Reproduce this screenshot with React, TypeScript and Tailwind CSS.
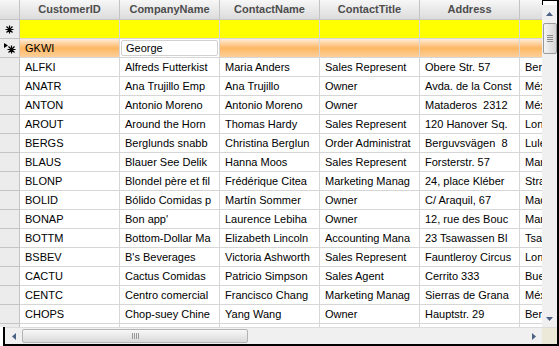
import React from "react";

const columns = ["CustomerID", "CompanyName", "ContactName", "ContactTitle", "Address", "City"];

const rows = [
    ["ALFKI", "Alfreds Futterkist", "Maria Anders", "Sales Represent", "Obere Str. 57", "Berlin"],
    ["ANATR", "Ana Trujillo Emp", "Ana Trujillo", "Owner", "Avda. de la Const", "México D.F."],
    ["ANTON", "Antonio Moreno", "Antonio Moreno", "Owner", "Mataderos  2312", "México D.F."],
    ["AROUT", "Around the Horn", "Thomas Hardy", "Sales Represent", "120 Hanover Sq.", "London"],
    ["BERGS", "Berglunds snabb", "Christina Berglun", "Order Administrat", "Berguvsvägen  8", "Luleå"],
    ["BLAUS", "Blauer See Delik", "Hanna Moos", "Sales Represent", "Forsterstr. 57", "Mannheim"],
    ["BLONP", "Blondel père et fil", "Frédérique Citea", "Marketing Manag", "24, place Kléber", "Strasbourg"],
    ["BOLID", "Bólido Comidas p", "Martín Sommer", "Owner", "C/ Araquil, 67", "Madrid"],
    ["BONAP", "Bon app'", "Laurence Lebiha", "Owner", "12, rue des Bouc", "Marseille"],
    ["BOTTM", "Bottom-Dollar Ma", "Elizabeth Lincoln", "Accounting Mana", "23 Tsawassen Bl", "Tsawassen"],
    ["BSBEV", "B's Beverages", "Victoria Ashworth", "Sales Represent", "Fauntleroy Circus", "London"],
    ["CACTU", "Cactus Comidas", "Patricio Simpson", "Sales Agent", "Cerrito 333", "Buenos Aires"],
    ["CENTC", "Centro comercial", "Francisco Chang", "Marketing Manag", "Sierras de Grana", "México D.F."],
    ["CHOPS", "Chop-suey Chine", "Yang Wang", "Owner", "Hauptstr. 29", "Bern"],
    ["", "", "", "", "", ""],
];

const orange = "bg-gradient-to-b from-[#feecd8] via-[#fdb762] to-[#fdcf98]";

function Star() {
    return (
        <svg width="9" height="9" viewBox="0 0 9 9" className="text-black">
            <path d="M4.5 0.5V8.5M0.5 4.5H8.5M1.5 1.5L7.5 7.5M7.5 1.5L1.5 7.5" stroke="currentColor" strokeWidth="1.2" />
        </svg>
    )
}

function RowHead({ children }: { children?: React.ReactNode }) {
    return (
        <div className="w-[20px] h-[19px] shrink-0 bg-[#ececec] border-r border-b border-[#c4c4c4] flex items-center justify-center relative">
            {children}
        </div>
    )
}

function Cell({ text, className = "" }: { text: string; className?: string }) {
    return (
        <div className={`w-[100px] h-[19px] shrink-0 border-r border-b border-[#d6d6d6] pl-[5px] overflow-hidden whitespace-pre leading-[18px] ${className}`}>
            {text}
        </div>
    )
}

function VScroll() {
    return (
        <div className="w-[17px] shrink-0 flex flex-col border-r-2 border-black">
            <div className="h-[5px] border-t border-l border-black bg-white" />
            <div className="flex-1 bg-[#f0f0f0] flex flex-col items-center">
                <div className="h-[18px] flex items-center justify-center">
                    <svg width="7" height="4" viewBox="0 0 7 4"><path d="M3.5 0L7 4H0Z" fill="#4d6185" /></svg>
                </div>
                <div className="w-[14px] h-[31px] rounded-[2px] border border-[#9a9a9a] bg-gradient-to-r from-[#f4f4f4] to-[#d6d6d6] flex flex-col items-center justify-center gap-[1px]">
                    <div className="w-[6px] h-px bg-[#8a8a8a]" />
                    <div className="w-[6px] h-px bg-[#8a8a8a]" />
                    <div className="w-[6px] h-px bg-[#8a8a8a]" />
                    <div className="w-[6px] h-px bg-[#8a8a8a]" />
                </div>
                <div className="flex-1" />
                <div className="h-[16px] flex items-center justify-center">
                    <svg width="7" height="4" viewBox="0 0 7 4"><path d="M0 0H7L3.5 4Z" fill="#4d6185" /></svg>
                </div>
            </div>
        </div>
    )
}

function HScroll() {
    return (
        <div className="h-[19px] flex">
            <div className="w-[3px] bg-white" />
            <div className="w-[2px] bg-black" />
            <div className="flex-1 flex flex-col">
                <div className="h-[17px] flex items-center bg-[#f0f0f0] border-t border-[#dcdcdc]">
                    <div className="w-[17px] flex items-center justify-center">
                        <svg width="4" height="7" viewBox="0 0 4 7"><path d="M4 0V7L0 3.5Z" fill="#4d6185" /></svg>
                    </div>
                    <div className="w-[226px] h-[14px] rounded-[2px] border border-[#b4b4b4] bg-gradient-to-b from-[#f8f8f8] to-[#dadada] flex items-center justify-center gap-[1px]">
                        <div className="w-px h-[6px] bg-[#9a9a9a]" />
                        <div className="w-px h-[6px] bg-[#9a9a9a]" />
                        <div className="w-px h-[6px] bg-[#9a9a9a]" />
                        <div className="w-px h-[6px] bg-[#9a9a9a]" />
                    </div>
                    <div className="flex-1" />
                    <div className="w-[17px] flex items-center justify-center">
                        <svg width="4" height="7" viewBox="0 0 4 7"><path d="M0 0V7L4 3.5Z" fill="#4d6185" /></svg>
                    </div>
                    <div className="w-[15px] h-[17px] bg-[#ece9d8]" />
                </div>
                <div className="h-[2px] bg-black" />
            </div>
            <div className="w-[2px] bg-black" />
        </div>
    )
}

export default function App() {
    return (
        <div className="w-[559px] h-[346px] bg-white flex flex-col overflow-hidden text-[11px] text-black font-['Liberation_Sans',Arial,sans-serif]">
            <div className="flex h-[327px]">
                <div className="w-[542px] shrink-0 overflow-hidden flex flex-col">
                    <div className="flex h-[20px] shrink-0">
                        <div className="w-[20px] shrink-0 border-r border-b border-[#c4c4c4] bg-gradient-to-b from-[#f7f7f7] to-[#dcdcdc]" />
                        {columns.map((c) => (
                            <div key={c} className="w-[100px] shrink-0 border-r border-b border-[#c4c4c4] bg-gradient-to-b from-[#f7f7f7] to-[#dcdcdc] flex items-center justify-center font-bold text-[#4d4d4d] whitespace-nowrap overflow-hidden">
                                {c === "City" ? "" : c}
                            </div>
                        ))}
                    </div>

                    {/* new row */}
                    <div className="flex shrink-0">
                        <RowHead><Star /></RowHead>
                        {columns.map((c) => (
                            <Cell key={c} text="" className="bg-[#ffff00]" />
                        ))}
                    </div>

                    {/* row being edited */}
                    <div className="flex shrink-0">
                        <RowHead>
                            <svg width="4" height="5" viewBox="0 0 4 5" className="absolute left-[4px] top-[4px]"><path d="M0 0L4 2.5L0 5Z" fill="#000" /></svg>
                            <div className="ml-[3px] mt-[2px]"><Star /></div>
                        </RowHead>
                        <Cell text="GKWI" className={orange} />
                        <div className="w-[100px] h-[19px] shrink-0 border-r border-b border-[#d6d6d6] bg-white p-px">
                            <div className="h-full rounded-[2px] border border-[#d0d0d0] pl-[4px] leading-[15px]">George</div>
                        </div>
                        {columns.slice(2).map((c) => (
                            <Cell key={c} text="" className={orange} />
                        ))}
                    </div>

                    {rows.map((r, idx) => (
                        <div key={idx} className="flex shrink-0">
                            <RowHead />
                            {r.map((t, i) => (
                                <Cell key={i} text={t} />
                            ))}
                        </div>
                    ))}
                </div>
                <VScroll />
            </div>
            <HScroll />
        </div>
    )
}
